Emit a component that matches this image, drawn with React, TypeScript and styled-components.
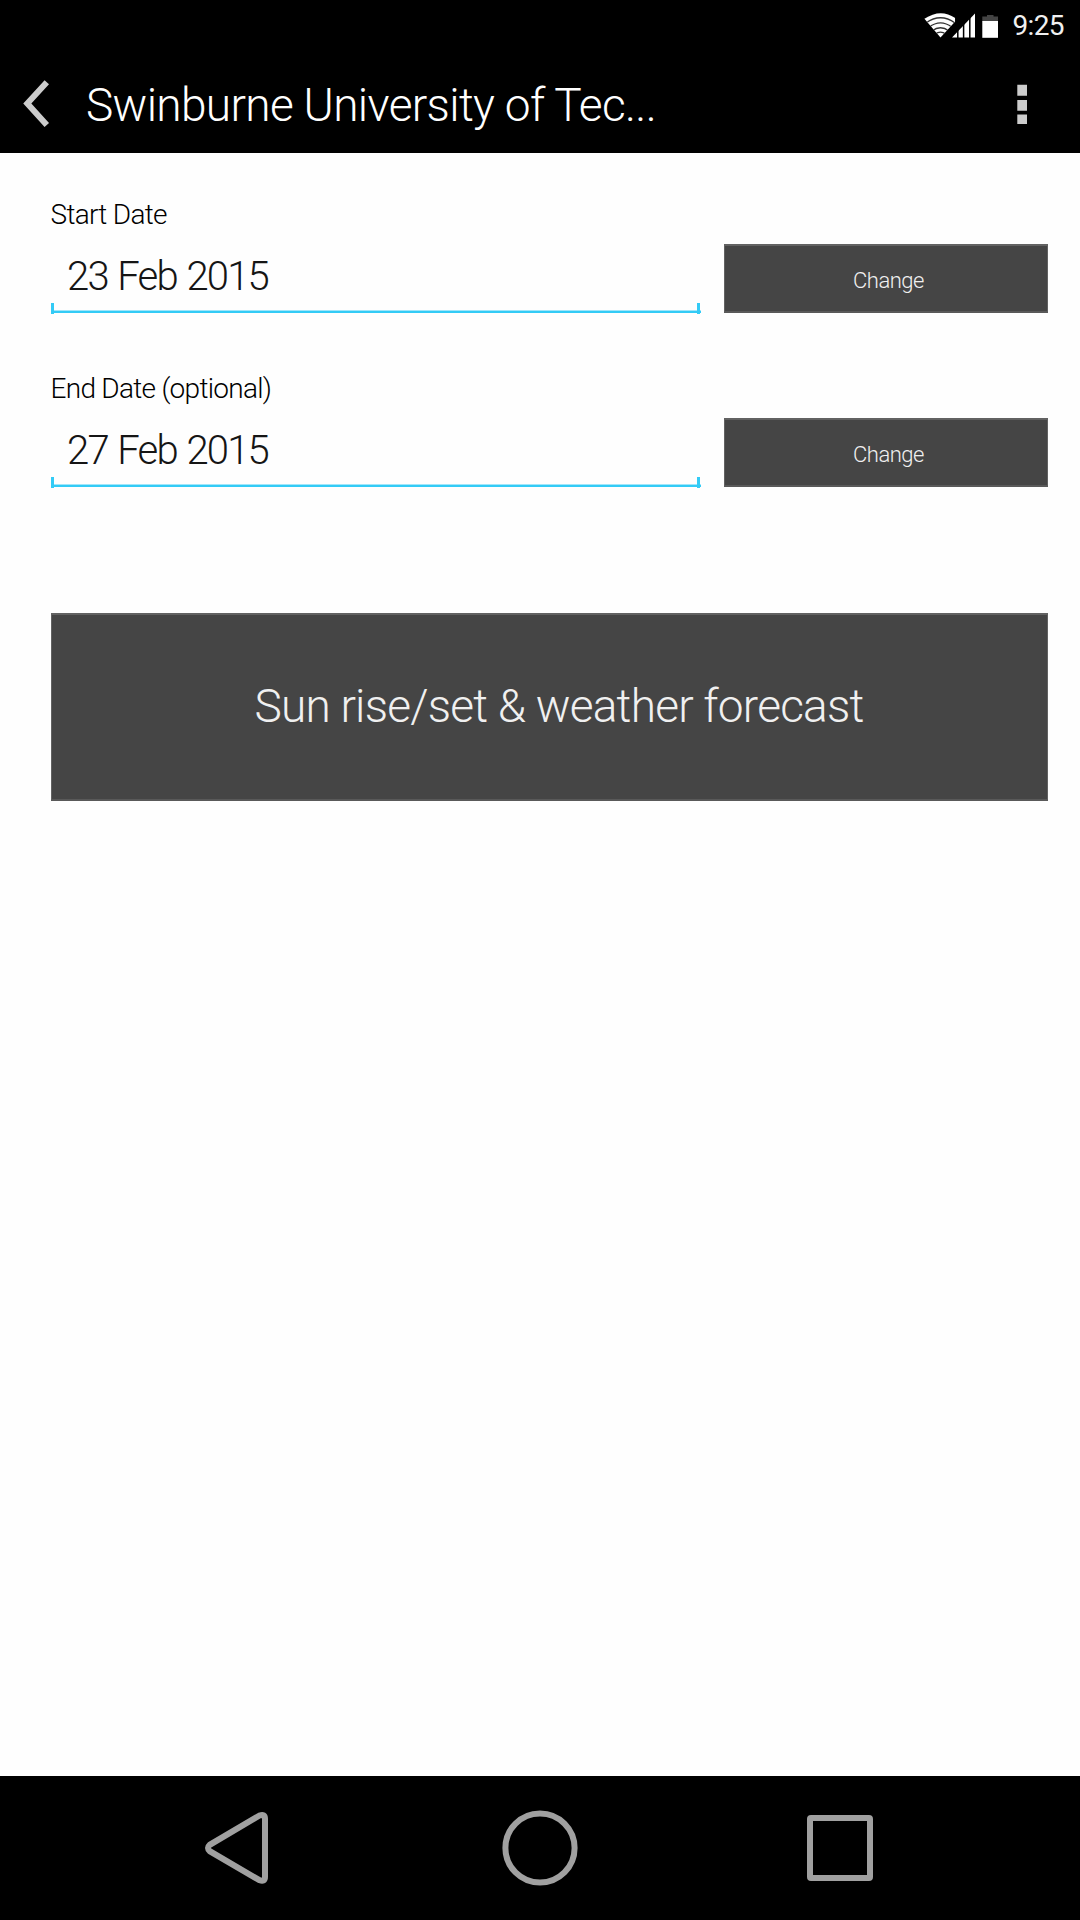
import React from "react";
import styled, { createGlobalStyle } from "styled-components";

const GlobalStyle = createGlobalStyle`
  * { box-sizing: border-box; }
  body { margin: 0; background: #fefefe; }
`;

const Screen = styled.div`
  width: 1080px;
  height: 1920px;
  display: flex;
  flex-direction: column;
  font-family: Roboto, sans-serif;
  font-weight: 300;
  background: #fefefe;
  color: #000;
  overflow: hidden;
`;

const StatusBar = styled.div`
  display: flex;
  justify-content: flex-end;
  align-items: center;
  height: 50px;
  padding-right: 16px;
  background: #000;
`;

const StatusIcons = styled.svg`
  display: block;
  margin-right: 14px;
`;

const Clock = styled.span`
  padding-top: 1px;
  font-size: 28px;
  font-weight: 400;
  line-height: 50px;
  letter-spacing: -0.6px;
  color: #f0f0f0;
`;

const ActionBar = styled.header`
  display: flex;
  align-items: center;
  height: 103px;
  padding: 0 53px 0 22px;
  background: #000;
`;

const IconButton = styled.button`
  display: flex;
  padding: 0;
  border: 0;
  background: none;
`;

const Title = styled.h1`
  flex: 1;
  margin: 6px 0 0 34px;
  font-size: 46px;
  font-weight: 300;
  line-height: 54px;
  letter-spacing: -0.66px;
  white-space: nowrap;
  color: #fff;
`;

const Content = styled.main`
  flex: 1;
  display: flex;
  flex-direction: column;
  padding: 45px 32px 0 51px;
`;

const Fields = styled.div`
  display: flex;
  flex-direction: column;
  gap: 58px;
`;

const Field = styled.section`
  display: flex;
  flex-direction: column;
  gap: 12px;
`;

const Label = styled.label`
  margin-left: -0.5px;
  font-size: 28px;
  font-weight: 300;
  line-height: 34px;
  letter-spacing: -0.72px;
`;

const FieldRow = styled.div`
  display: flex;
  align-items: flex-start;
  gap: 23px;
  height: 70px;
`;

const DateValue = styled.div`
  width: 650px;
  height: 70px;
  padding: 9px 16px 0;
  font-size: 40px;
  line-height: 48px;
  letter-spacing: -1.8px;
  word-spacing: 1.6px;
  color: #151515;
  background:
    linear-gradient(#33cbf6, #33cbf6) 0 59px / 3px 11px no-repeat,
    linear-gradient(#33cbf6, #33cbf6) 646px 59px / 3px 11px no-repeat,
    linear-gradient(#a0e6fa 1px, #33cbf6 1px) 0 66px / 650px 3px no-repeat;
`;

const ActionButton = styled.button<{ $large?: boolean }>`
  display: flex;
  align-items: center;
  justify-content: center;
  width: ${(p) => (p.$large ? "997px" : "324px")};
  height: ${(p) => (p.$large ? "188px" : "69px")};
  margin-top: ${(p) => (p.$large ? "125px" : "0")};
  padding: ${(p) => (p.$large ? "0 0 3px 19px" : "3px 0 0 5px")};
  border: 1px solid #626262;
  border-top-width: 2px;
  border-bottom: 2px solid #595959;
  border-radius: 0;
  background: #454545;
  color: #f0f0f0;
  font-family: inherit;
  font-weight: 300;
  font-size: ${(p) => (p.$large ? "46px" : "22px")};
  letter-spacing: ${(p) => (p.$large ? "-0.77px" : "-0.5px")};
`;

const NavBar = styled.nav`
  display: grid;
  grid-template-columns: repeat(3, 300px);
  justify-content: center;
  justify-items: center;
  align-items: center;
  height: 144px;
  background: #000;
`;

function DateField({ label, value }: { label: string; value: string }) {
  return (
    <Field>
      <Label>{label}</Label>
      <FieldRow>
        <DateValue>{value}</DateValue>
        <ActionButton>Change</ActionButton>
      </FieldRow>
    </Field>
  );
}

export default function App() {
  return (
    <Screen>
      <GlobalStyle />
      <StatusBar>
        <StatusIcons width="74" height="50" viewBox="924 0 74 50">
          <clipPath id="wifi">
            <path d="M924.4 18.8 Q940.5 8 955.2 18 V21.5 L940.5 37.6 Z" />
          </clipPath>
          <g clipPath="url(#wifi)">
            <rect x="924" y="12" width="31.2" height="27" fill="#fff" />
            <g fill="none" stroke="#333" strokeWidth="1.3">
              <path d="M926 23 Q940.5 12.5 955 23" />
              <path d="M929 27.2 Q940.5 18.5 952 27.2" />
              <path d="M932 31 Q940.5 24.5 949 31" />
              <path d="M935 34.2 Q940.5 30 946 34.2" />
            </g>
          </g>
          <path d="M952 37.5 L975 13.5 V37.5 Z" fill="#fff" />
          <path d="M957.8 14 V38 M963.6 14 V38 M969.8 14 V38" stroke="#000" strokeWidth="1.5" />
          <path d="M982.3 16.5 H987 V15 H993.5 V16.5 H998 V21.5 H982.3 Z" fill="#444" />
          <rect x="982.3" y="21" width="15.7" height="16.8" fill="#fff" />
        </StatusIcons>
        <Clock>9:25</Clock>
      </StatusBar>
      <ActionBar>
        <IconButton aria-label="Back">
          <svg width="30" height="50" viewBox="22 77 30 50">
            <path d="M46.8 82.3 L27.3 103.4 L46.8 125" fill="none" stroke="#ccc" strokeWidth="6" />
          </svg>
        </IconButton>
        <Title>Swinburne University of Tec...</Title>
        <IconButton aria-label="More options">
          <svg width="10" height="47" viewBox="1017 78 10 47">
            <path d="M1017.3 84.7 h9.7 v11 h-9.7 z M1017.3 100 h9.7 v10.8 h-9.7 z M1017.3 114.6 h9.7 v9.4 h-9.7 z" fill="#ccc" />
          </svg>
        </IconButton>
      </ActionBar>
      <Content>
        <Fields>
          <DateField label="Start Date" value="23 Feb 2015" />
          <DateField label="End Date (optional)" value="27 Feb 2015" />
        </Fields>
        <ActionButton $large>Sun rise/set &amp; weather forecast</ActionButton>
      </Content>
      <NavBar>
        <svg width="72" height="80" viewBox="204 1808 72 80" fill="none" stroke="#a0a0a0" strokeWidth="6">
          <path d="M259.5 1815.5 L209.8 1844.8 Q206.2 1848 209.8 1851.2 L259.5 1880.2 Q265 1882 265 1877 V1818.8 Q265 1813.5 259.5 1815.5 Z" />
        </svg>
        <svg width="80" height="80" viewBox="500 1808 80 80" fill="none" stroke="#a0a0a0" strokeWidth="6">
          <circle cx="540" cy="1848" r="34.6" />
        </svg>
        <svg width="80" height="80" viewBox="800 1808 80 80">
          <path fillRule="evenodd" fill="#a0a0a0" d="M811 1815 H869 a4 4 0 0 1 4 4 V1877 a4 4 0 0 1 -4 4 H811 a4 4 0 0 1 -4 -4 V1819 a4 4 0 0 1 4 -4 Z M813 1821 V1875 H867 V1821 Z" />
        </svg>
      </NavBar>
    </Screen>
  );
}
